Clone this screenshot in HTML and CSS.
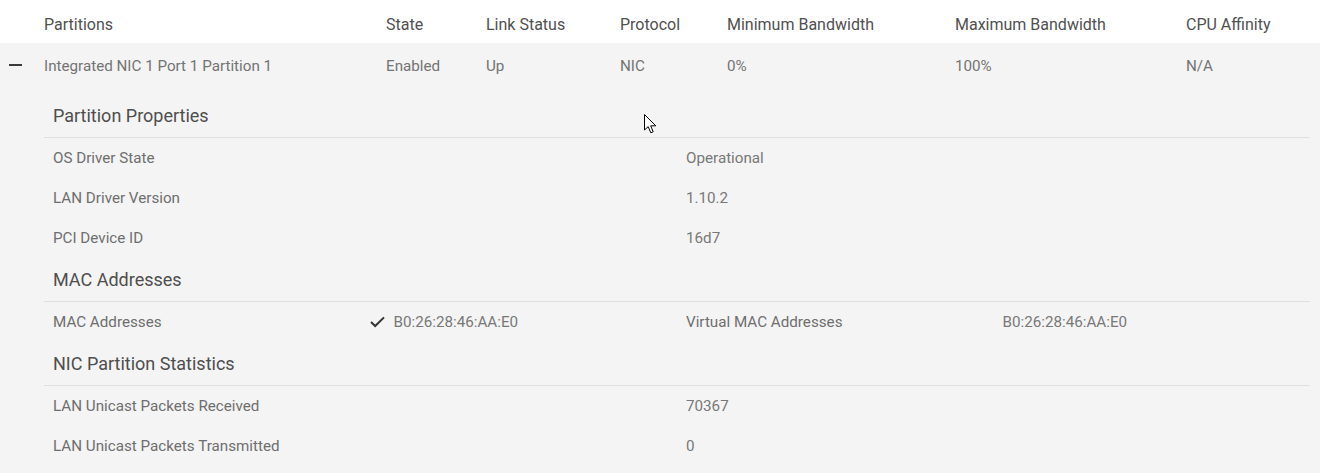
FILE: index.html
```html
<!DOCTYPE html>
<html>
<head>
<meta charset="utf-8">
<link rel="stylesheet" href="styles.css">
</head>
<body>
<div class="table">
  <div class="thead grid-main">
    <div class="c">Partitions</div>
    <div class="c">State</div>
    <div class="c">Link Status</div>
    <div class="c">Protocol</div>
    <div class="c">Minimum Bandwidth</div>
    <div class="c">Maximum Bandwidth</div>
    <div class="c">CPU Affinity</div>
  </div>
  <div class="expanded">
    <div class="row grid-main">
      <span class="toggle"></span>
      <div class="c">Integrated NIC 1 Port 1 Partition 1</div>
      <div class="c">Enabled</div>
      <div class="c">Up</div>
      <div class="c">NIC</div>
      <div class="c">0%</div>
      <div class="c">100%</div>
      <div class="c">N/A</div>
    </div>
    <div class="details">
      <div class="section-title">Partition Properties</div>
      <div class="kv"><div class="k">OS Driver State</div><div class="v">Operational</div></div>
      <div class="kv"><div class="k">LAN Driver Version</div><div class="v">1.10.2</div></div>
      <div class="kv"><div class="k">PCI Device ID</div><div class="v">16d7</div></div>

      <div class="section-title">MAC Addresses</div>
      <div class="kv4">
        <div class="k">MAC Addresses</div>
        <div class="v check-v"><svg class="check" width="15" height="12" viewBox="0 0 15 12"><path d="M1 6 L5.2 10 L14 1.4" fill="none" stroke="#333" stroke-width="2"/></svg>B0:26:28:46:AA:E0</div>
        <div class="k">Virtual MAC Addresses</div>
        <div class="v">B0:26:28:46:AA:E0</div>
      </div>

      <div class="section-title">NIC Partition Statistics</div>
      <div class="kv"><div class="k">LAN Unicast Packets Received</div><div class="v">70367</div></div>
      <div class="kv"><div class="k">LAN Unicast Packets Transmitted</div><div class="v">0</div></div>
    </div>
  </div>
</div>
<svg class="cursor" width="14" height="21" viewBox="0 0 14 21"><path d="M0.5 0.5 L0.5 16 L4.2 12.6 L6.8 18.8 L9.2 17.8 L6.7 11.8 L11.8 11.8 Z" fill="#fff" stroke="#000" stroke-width="1" stroke-linejoin="round"/></svg>
</body>
</html>
```

FILE: styles.css
```css
* { box-sizing: border-box; }
html, body {
  margin: 0;
  padding: 0;
  height: 100%;
}
body {
  font-family: Roboto, "Liberation Sans", sans-serif;
  font-size: 15.2px;
  background: #f4f4f4;
  color: #707070;
  position: relative;
}
.grid-main {
  display: grid;
  grid-template-columns: 342px 100px 134px 107px 228px 231px 1fr;
  padding-left: 44px;
  align-items: center;
}
.thead {
  height: 43px;
  padding-top: 5px;
  background: #fff;
  color: #505050;
  font-size: 16px;
}
.row {
  height: 45px;
  position: relative;
  color: #737373;
}
.toggle {
  position: absolute;
  left: 9px;
  top: 21px;
  width: 13px;
  height: 2px;
  background: #3a3a3a;
}
.details {
  margin: 0 10px 0 44px;
  padding-top: 6px;
}
.section-title {
  height: 44px;
  display: flex;
  align-items: center;
  padding-left: 9px;
  font-size: 18px;
  color: #4e4e4e;
  border-bottom: 1px solid #e0e0e0;
}
.kv {
  display: grid;
  grid-template-columns: 1fr 1fr;
  height: 40px;
  align-items: center;
}
.kv4 {
  display: grid;
  grid-template-columns: repeat(4, 1fr);
  height: 40px;
  align-items: center;
}
.k, .v { padding-left: 9px; }
.k { color: #6e6e6e; }
.v { color: #787878; }
.check-v {
  display: flex;
  align-items: center;
  gap: 9px;
}
.check { flex: none; }
.cursor {
  position: absolute;
  left: 644px;
  top: 114px;
}
```
